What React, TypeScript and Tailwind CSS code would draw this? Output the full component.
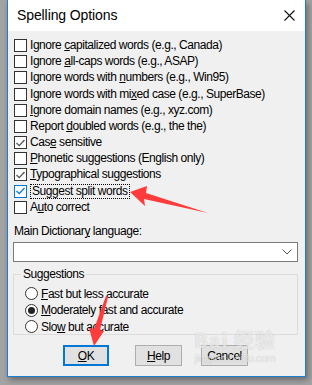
import type { ReactNode } from "react";

const font = "font-['Liberation_Sans',Arial,sans-serif]";

function Box({ checked, active }: { checked?: boolean; active?: boolean }) {
  return (
    <span
      className={`flex h-[13px] w-[13px] shrink-0 items-center justify-center border bg-white ${
        active ? "border-[#0078d7]" : "border-[#333333]"
      }`}
    >
      {checked && (
        <svg width="9" height="8" viewBox="0 0 9 8">
          <polyline
            points="0.5,4 3.2,6.6 8.5,1"
            fill="none"
            stroke={active ? "#0078d7" : "#555555"}
            strokeWidth="1.3"
          />
        </svg>
      )}
    </span>
  );
}

function CheckRow({ label, checked, active }: { label: ReactNode; checked?: boolean; active?: boolean }) {
  return (
    <div className="flex h-[16.2px] items-center">
      <Box checked={checked} active={active} />
      <span
        className={`ml-[3px] whitespace-nowrap leading-[13px] ${
          active ? "-ml-[1px] border border-dotted border-black px-[1px] py-[0px]" : ""
        }`}
      >
        {label}
      </span>
    </div>
  );
}

function Radio({ label, on }: { label: ReactNode; on?: boolean }) {
  return (
    <div className="flex h-[16.5px] items-center">
      <span className="flex h-[13px] w-[13px] shrink-0 items-center justify-center rounded-full border border-[#333333] bg-white">
        {on && <span className="h-[7px] w-[7px] rounded-full bg-[#222222]" />}
      </span>
      <span className="ml-[3px] whitespace-nowrap">{label}</span>
    </div>
  );
}

export default function App() {
  const items: { label: ReactNode; checked?: boolean; active?: boolean }[] = [
    { label: <>Ignore <u>c</u>apitalized words (e.g., Canada)</> },
    { label: <>Ignore <u>a</u>ll-caps words (e.g., ASAP)</> },
    { label: <>Ignore words with <u>n</u>umbers (e.g., Win95)</> },
    { label: <>Ignore words with mi<u>x</u>ed case (e.g., SuperBase)</> },
    { label: <><u>I</u>gnore domain names (e.g., xyz.com)</> },
    { label: <>Report <u>d</u>oubled words (e.g., the the)</> },
    { label: <>Cas<u>e</u> sensitive</>, checked: true },
    { label: <><u>P</u>honetic suggestions (English only)</> },
    { label: <><u>T</u>ypographical suggestions</>, checked: true },
    { label: <>Suggest split words</>, checked: true, active: true },
    { label: <>A<u>u</u>to correct</> },
  ];

  return (
    <div className={`relative h-[385px] w-[312px] overflow-hidden bg-[#a3a3a3] ${font} text-[12px] tracking-[-0.45px] text-black`}>
      <div className="ml-[7px] flex h-[377px] w-[299px] flex-col border-x border-b border-[#1c7fd6] shadow-[2px_3px_6px_rgba(0,0,0,0.35)]">
        <div className="flex h-[31px] items-center justify-between bg-white pl-[9px] pr-[10px]">
          <span className="text-[14px] tracking-[-0.1px]">Spelling Options</span>
          <svg width="11" height="11" viewBox="0 0 11 11">
            <path d="M0.5 0.5 L10.5 10.5 M10.5 0.5 L0.5 10.5" stroke="#111" strokeWidth="1.1" />
          </svg>
        </div>
        <div className="flex flex-1 flex-col bg-[#f0f0f0] pl-[6px] pt-[6.4px]">
          {items.map((it, i) => (
            <CheckRow key={i} label={it.label} checked={it.checked} active={it.active} />
          ))}
          <div className="mt-[9px] leading-[14px]">
            Main Dictionar<u>y</u> language:
          </div>
          <div className="ml-[-1px] mt-[4px] flex h-[20px] w-[285px] items-center justify-end border border-[#7a7a7a] bg-white pr-[5px]">
            <svg width="10" height="6" viewBox="0 0 10 6">
              <polyline points="0.5,0.5 5,5 9.5,0.5" fill="none" stroke="#555" strokeWidth="1" />
            </svg>
          </div>
          <fieldset className="ml-[-1px] mt-[4px] h-[69px] w-[285px] border border-[#dcdcdc] pl-[11px]">
            <legend className="ml-[-4px] px-[2px] leading-[16px]">Suggestions</legend>
            <div className="mt-[3px]">
              <Radio label={<><u>F</u>ast but less accurate</>} />
              <Radio label={<><u>M</u>oderately fast and accurate</>} on />
              <Radio label={<>Slo<u>w</u> but accurate</>} />
            </div>
          </fieldset>
          <div className="mt-[10px] flex">
            <button className="ml-[49px] flex h-[21px] w-[46px] items-center justify-center border-2 border-[#0078d7] bg-[#e1e1e1]">
              <u>O</u>K
            </button>
            <button className="ml-[26px] flex h-[21px] w-[47px] items-center justify-center border border-[#adadad] bg-[#e1e1e1]">
              <u>H</u>elp
            </button>
            <button className="ml-[19px] flex h-[21px] w-[47px] items-center justify-center border border-[#adadad] bg-[#e1e1e1]">
              Cancel
            </button>
          </div>
        </div>
      </div>

      <div className="pointer-events-none absolute left-[194px] top-[328px] flex flex-col items-center text-white/70 [text-shadow:0_0_1px_rgba(0,0,0,0.25)]">
        <span className="font-['Noto_Sans_CJK_SC',sans-serif] text-[20px] font-bold leading-[24px] tracking-[1px]">Bai 经验</span>
        <span className="text-[11px] leading-[12px]">jingyan.baidu.com</span>
      </div>

      <svg className="pointer-events-none absolute left-0 top-0" width="312" height="385" viewBox="0 0 312 385">
        <polygon points="130,192 147,186 146,193 208,213 144,199 145,206" fill="#ff3b3b" />
        <polygon points="106,296 108,297 100,330 104,331 94,346 89,328 94,329" fill="#ff3b3b" />
      </svg>
    </div>
  );
}
